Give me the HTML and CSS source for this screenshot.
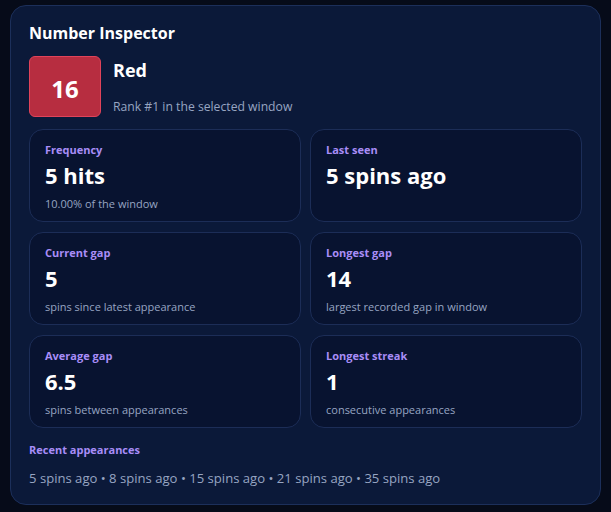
FILE: index.html
```html
<!DOCTYPE html>
<html>
<head>
<meta charset="utf-8">
<link rel="stylesheet" href="styles.css">
</head>
<body>
<div class="panel">
  <h2 class="title">Number Inspector</h2>
  <div class="head">
    <div class="badge">16</div>
    <div class="head-info">
      <div class="color-name">Red</div>
      <div class="rank">Rank #1 in the selected window</div>
    </div>
  </div>
  <div class="grid">
    <div class="cell">
      <div class="label">Frequency</div>
      <div class="value">5 hits</div>
      <div class="sub">10.00% of the window</div>
    </div>
    <div class="cell">
      <div class="label">Last seen</div>
      <div class="value">5 spins ago</div>
    </div>
    <div class="cell">
      <div class="label">Current gap</div>
      <div class="value">5</div>
      <div class="sub">spins since latest appearance</div>
    </div>
    <div class="cell">
      <div class="label">Longest gap</div>
      <div class="value">14</div>
      <div class="sub">largest recorded gap in window</div>
    </div>
    <div class="cell">
      <div class="label">Average gap</div>
      <div class="value">6.5</div>
      <div class="sub">spins between appearances</div>
    </div>
    <div class="cell">
      <div class="label">Longest streak</div>
      <div class="value">1</div>
      <div class="sub">consecutive appearances</div>
    </div>
  </div>
  <div class="recent-label">Recent appearances</div>
  <div class="recent">5 spins ago • 8 spins ago • 15 spins ago • 21 spins ago • 35 spins ago</div>
</div>
</body>
</html>
```
FILE: styles.css
```css
html, body {
  margin: 0;
  padding: 0;
  background: #060b19;
}
body {
  padding: 5px 10px 0 10px;
  font-family: "Open Sans", "Noto Sans", sans-serif;
  color: #ffffff;
}
.panel {
  width: 591px;
  height: 500px;
  box-sizing: border-box;
  background: #0b1939;
  border: 1px solid #1c2f5a;
  border-radius: 16px;
  padding: 16px 18px 0 18px;
}
.title {
  margin: 0;
  font-size: 16px;
  font-weight: 700;
  line-height: 22px;
}
.head {
  display: flex;
  gap: 12px;
  margin-top: 12px;
}
.badge {
  width: 72px;
  height: 61px;
  box-sizing: border-box;
  background: #b72d40;
  border: 1px solid #e0435a;
  border-radius: 6px;
  display: flex;
  align-items: center;
  justify-content: center;
  font-size: 24px;
  font-weight: 700;
  padding-top: 4px;
}
.head-info {
  display: flex;
  flex-direction: column;
}
.color-name {
  font-size: 18px;
  font-weight: 700;
  line-height: 24px;
  margin-top: 2px;
}
.rank {
  font-size: 12.2px;
  color: #97a5c2;
  margin-top: 16px;
}
.grid {
  display: grid;
  grid-template-columns: 1fr 1fr;
  gap: 10px 9px;
  margin-top: 12px;
}
.cell {
  height: 93px;
  box-sizing: border-box;
  background: #081330;
  border: 1px solid #1c2d57;
  border-radius: 14px;
  padding: 12px 15px 0 15px;
}
.label {
  font-size: 11px;
  font-weight: 700;
  color: #a88df7;
  line-height: 16px;
}
.value {
  font-size: 22px;
  font-weight: 700;
  line-height: 30px;
  margin-top: 2px;
}
.sub {
  font-size: 11px;
  color: #97a5c2;
  line-height: 16px;
  margin-top: 6px;
}
.recent-label {
  margin-top: 14px;
  font-size: 11px;
  font-weight: 700;
  color: #a88df7;
  line-height: 16px;
}
.recent {
  margin-top: 11px;
  font-size: 13.1px;
  color: #97a5c2;
  line-height: 18px;
}
```
